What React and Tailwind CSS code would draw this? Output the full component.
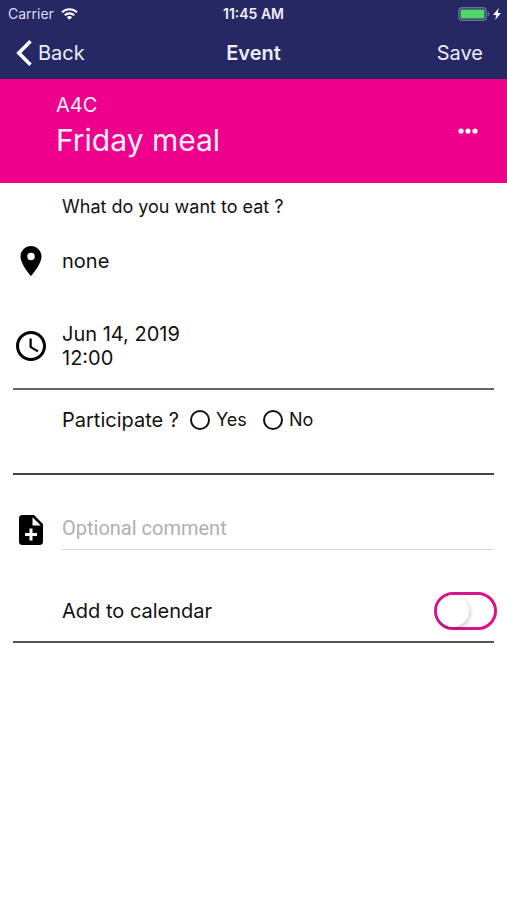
import { useState } from 'react';
import { MdAccessTime, MdLocationOn, MdNoteAdd } from 'react-icons/md';

const StatusBar = () => (
  <div className="grid h-[27px] grid-cols-3 items-center px-[6px] text-white">
    <div className="flex items-center gap-[7px] pl-[2px] text-sm text-[#dcdcf2]">
      <span>Carrier</span>
      <svg className="h-[12px] w-[17px]" viewBox="0 0 17 12" fill="none" stroke="#fff" aria-hidden="true">
        <path d="M1 4.3a10.8 10.8 0 0 1 15 0" strokeWidth="2.2" />
        <path d="M3.8 7.3a6.7 6.7 0 0 1 9.4 0" strokeWidth="2.2" />
        <path d="M8.500 11.800 5.900 9.200a3.700 3.700 0 0 1 5.200 0Z" fill="#fff" stroke="none" />
      </svg>
    </div>
    <div className="text-center text-sm font-semibold whitespace-nowrap text-[#eeeefa]">11:45 AM</div>
    <div className="flex items-center justify-end gap-[3px]">
      <svg className="h-[14px] w-[32px]" viewBox="0 0 32 14" aria-hidden="true">
        <rect x="0.8" y="0.8" width="27.4" height="12.4" rx="3.2" fill="none" stroke="#6f7199" strokeWidth="1.4" />
        <rect x="2.5" y="2.5" width="24" height="9" rx="1" fill="#4cd964" />
        <path d="M29.6 4.7a2.4 2.4 0 0 1 0 4.6Z" fill="#6f7199" />
      </svg>
      <svg className="h-[12px] w-[8px]" viewBox="0 0 8 12" aria-hidden="true">
        <path d="M5.8 0 0 7h3.3L2.2 12 8 5H4.7Z" fill="#fff" />
      </svg>
    </div>
  </div>
);

const NavBar = () => (
  <div className="grid h-[52px] grid-cols-3 items-center px-4 text-xl text-[#ececfa]">
    <button type="button" className="flex items-center gap-[6px]">
      <svg className="h-[26px] w-[16px]" viewBox="0 0 16 26" fill="none" stroke="#fff" strokeWidth="3.6" aria-hidden="true">
        <path d="M14.5 1.3 2.8 13l11.7 11.7" />
      </svg>
      Back
    </button>
    <h1 className="text-center font-semibold">Event</h1>
    <button type="button" className="justify-self-end pr-2">Save</button>
  </div>
);

const Row = ({ icon: Icon, className, children }) => (
  <div className={className}>
    <div className="flex w-9 shrink-0 justify-center">
      {Icon && <Icon className="h-9 w-9 text-black" aria-hidden="true" />}
    </div>
    <div className="min-w-0 flex-1">{children}</div>
  </div>
);

const App = () => {
  const [participate, setParticipate] = useState('');
  const [comment, setComment] = useState('');
  const [addToCalendar, setAddToCalendar] = useState(false);

  return (
    <div className="min-h-screen bg-white font-['Inter',sans-serif] text-[#111]">
      <header className="bg-[#252862]">
        <StatusBar />
        <NavBar />
      </header>

      {/* Event banner */}
      <section className="flex h-[104px] items-center bg-[#ef008c] pl-14 pr-7 text-[#fff0fa]">
        <div className="flex-1 pb-[6px]">
          <div className="text-xl leading-6">A4C</div>
          <h2 className="text-3xl leading-[46px]">Friday meal</h2>
        </div>
        <button type="button" aria-label="More options">
          <svg className="h-[6px] w-[22px]" viewBox="0 0 22 6" fill="#fff" aria-hidden="true">
            <circle cx="4" cy="3" r="2.6" />
            <circle cx="11" cy="3" r="2.6" />
            <circle cx="18" cy="3" r="2.6" />
          </svg>
        </button>
      </section>

      <main className="px-[13px] text-xl leading-6">
        <Row className="flex h-12 items-center gap-[13px]">
          <p className="text-lg">What do you want to eat ?</p>
        </Row>
        <Row icon={MdLocationOn} className="flex h-[60px] items-center gap-[13px]">
          <p>none</p>
        </Row>
        <Row icon={MdAccessTime} className="flex items-center gap-[13px] border-b-2 border-[#666] pb-[18px] pt-[31px]">
          <p>Jun 14, 2019</p>
          <p>12:00</p>
        </Row>

        <Row className="flex h-[85px] gap-[13px] border-b-2 border-[#444] pt-[18px]">
          <fieldset className="flex items-center">
            <legend className="float-left mr-[11px]">Participate ?</legend>
            {['Yes', 'No'].map((option) => (
              <label key={option} className="mr-4 flex items-center gap-[6px] text-lg leading-6">
                <input
                  type="radio"
                  name="participate"
                  value={option}
                  checked={participate === option}
                  onChange={() => setParticipate(option)}
                  className="h-5 w-5 appearance-none rounded-full border-2 border-[#111] checked:border-[6px]"
                />
                {option}
              </label>
            ))}
          </fieldset>
        </Row>

        <Row icon={MdNoteAdd} className="flex items-center gap-[13px] pt-[35px]">
          <input
            type="text"
            aria-label="Optional comment"
            placeholder="Optional comment"
            value={comment}
            onChange={(e) => setComment(e.target.value)}
            className="h-10 w-full border-b border-[#d8d8d8] pb-1 font-['Roboto',sans-serif] outline-none placeholder:text-[#b0b0b0]"
          />
        </Row>

        <div className="mt-[30px] border-b-2 border-[#555]">
          <Row className="flex h-[61px] items-center gap-[13px]">
            <label className="-mr-[3px] flex items-center justify-between">
              Add to calendar
              <input
                type="checkbox"
                role="switch"
                checked={addToCalendar}
                onChange={(e) => setAddToCalendar(e.target.checked)}
                className="h-[38px] w-[63px] appearance-none rounded-full border-3 border-[#dc148c] before:block before:h-8 before:w-8 before:rounded-full before:bg-white before:shadow-[1px_2px_4px_rgba(0,0,0,0.22)] checked:bg-[#ef008c] checked:before:ml-auto"
              />
            </label>
          </Row>
        </div>
      </main>
    </div>
  );
};

export default App;
